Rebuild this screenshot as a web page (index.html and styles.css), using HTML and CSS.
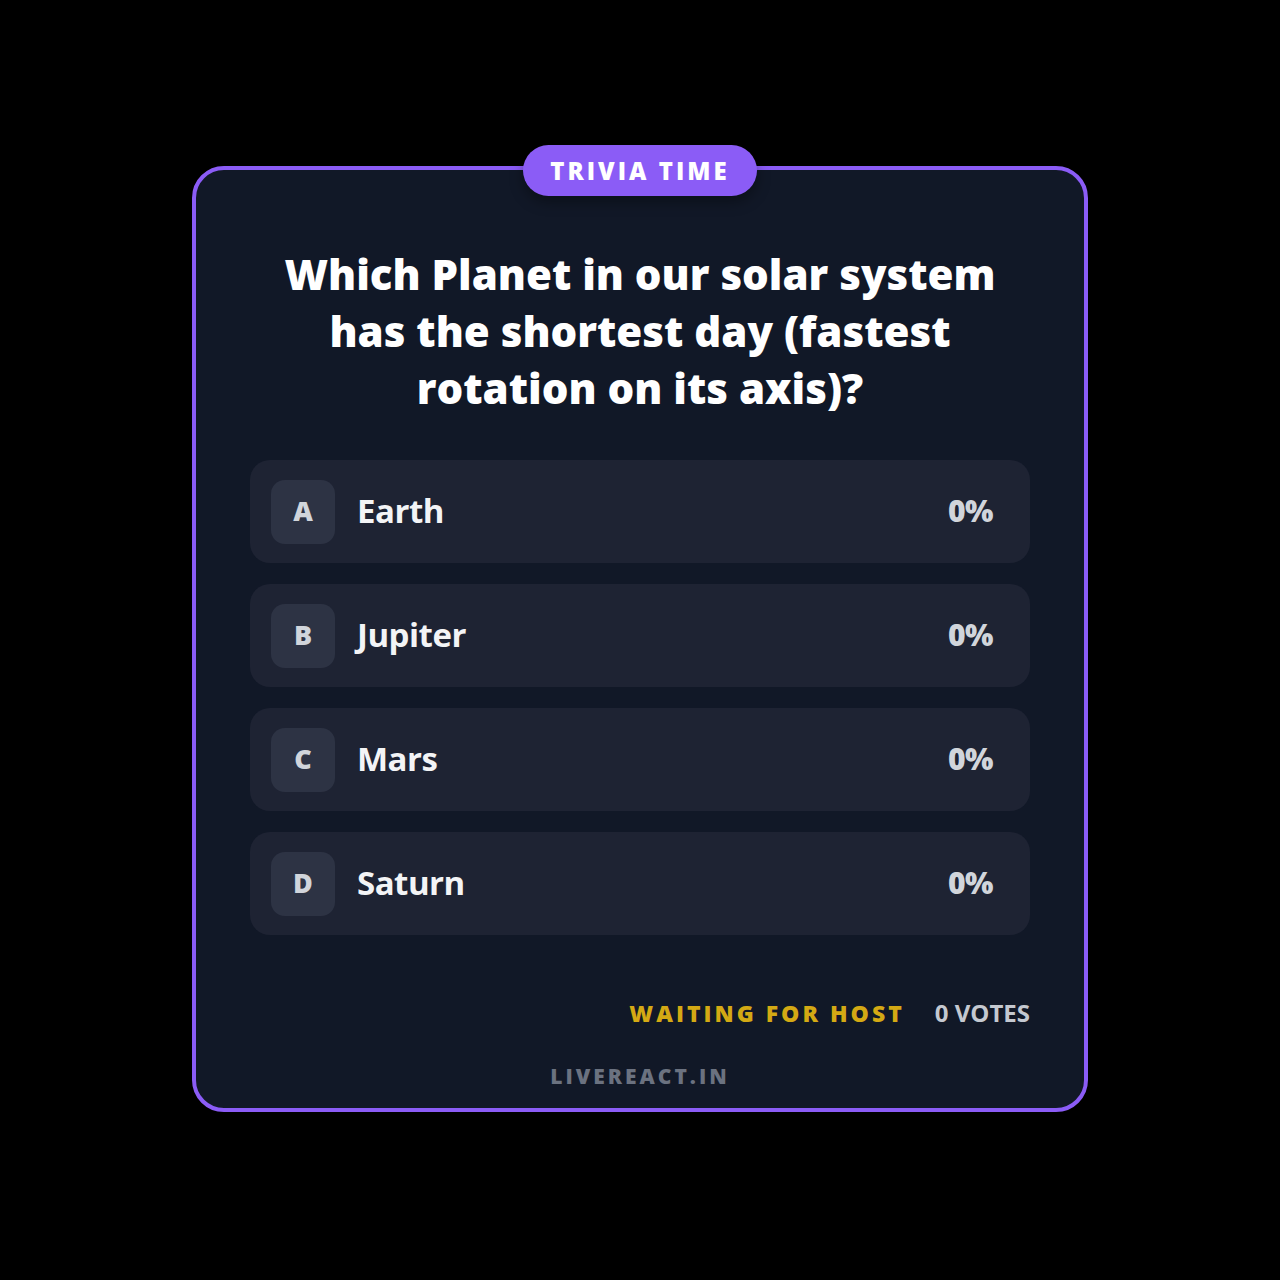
FILE: index.html
```html
<!DOCTYPE html>
<html lang="en">
<head>
    <meta charset="UTF-8">
    <title>Trivia Time</title>
    <link rel="stylesheet" href="styles.css">
</head>
<body>
    <div class="card">
        <div class="tag">TRIVIA TIME</div>

        <h1 class="question">Which Planet in our solar system has the shortest day (fastest rotation on its axis)?</h1>

        <div class="options">
            <div class="option">
                <span class="letter">A</span>
                <span class="label">Earth</span>
                <span class="pct">0%</span>
            </div>
            <div class="option">
                <span class="letter">B</span>
                <span class="label">Jupiter</span>
                <span class="pct">0%</span>
            </div>
            <div class="option">
                <span class="letter">C</span>
                <span class="label">Mars</span>
                <span class="pct">0%</span>
            </div>
            <div class="option">
                <span class="letter">D</span>
                <span class="label">Saturn</span>
                <span class="pct">0%</span>
            </div>
        </div>

        <div class="footer">
            <span class="waiting">WAITING FOR HOST</span>
            <span class="votes">0 VOTES</span>
        </div>

        <div class="brand">LIVEREACT.IN</div>
    </div>
</body>
</html>
```

FILE: styles.css
```css
body {
    margin: 0;
    background: #000;
    font-family: "Open Sans", Lato, sans-serif;
    color: #fff;
}
.card {
    position: relative;
    box-sizing: border-box;
    width: 896px;
    height: 946px;
    margin: 166px auto 0;
    padding: 75px 54px 0;
    background: #111827;
    border: 4px solid #8b5cf6;
    border-radius: 32px;
}
.tag {
    position: absolute;
    top: -25px;
    left: 50%;
    transform: translateX(-50%);
    width: 234px;
    height: 51px;
    line-height: 51px;
    text-align: center;
    background: #8b5cf6;
    border-radius: 26px;
    font-size: 24px;
    font-weight: 800;
    letter-spacing: 3px;
    box-shadow: 0 6px 14px rgba(0,0,0,0.35);
}
.question {
    margin: 0 auto;
    max-width: 730px;
    text-align: center;
    font-size: 42px;
    line-height: 57px;
    font-weight: 800;
}
.options {
    display: flex;
    flex-direction: column;
    gap: 21px;
    margin-top: 44px;
}
.option {
    display: flex;
    align-items: center;
    height: 103px;
    padding: 0 37px 0 21px;
    background: #1e2333;
    border-radius: 20px;
}
.letter {
    width: 64px;
    height: 64px;
    line-height: 62px;
    text-align: center;
    background: #2d3344;
    border-radius: 14px;
    color: #d1d5db;
    font-size: 27px;
    font-weight: 800;
}
.label {
    flex: 1;
    margin-left: 22px;
    margin-bottom: 2px;
    font-size: 33px;
    font-weight: 700;
    color: #f3f4f6;
    letter-spacing: -0.5px;
}
.pct {
    margin-bottom: 2px;
    font-size: 30px;
    font-weight: 800;
    color: #d1d5db;
    letter-spacing: -0.5px;
}
.footer {
    display: flex;
    justify-content: flex-end;
    align-items: center;
    gap: 30px;
    margin-top: 61px;
}
.waiting {
    color: #d4a914;
    font-size: 23px;
    font-weight: 800;
    letter-spacing: 3px;
}
.votes {
    color: #c4c8d0;
    font-size: 24px;
    font-weight: 700;
    letter-spacing: 0;
}
.brand {
    margin-top: 33px;
    text-align: center;
    color: #6b7280;
    font-size: 21px;
    font-weight: 800;
    letter-spacing: 3px;
}
```
